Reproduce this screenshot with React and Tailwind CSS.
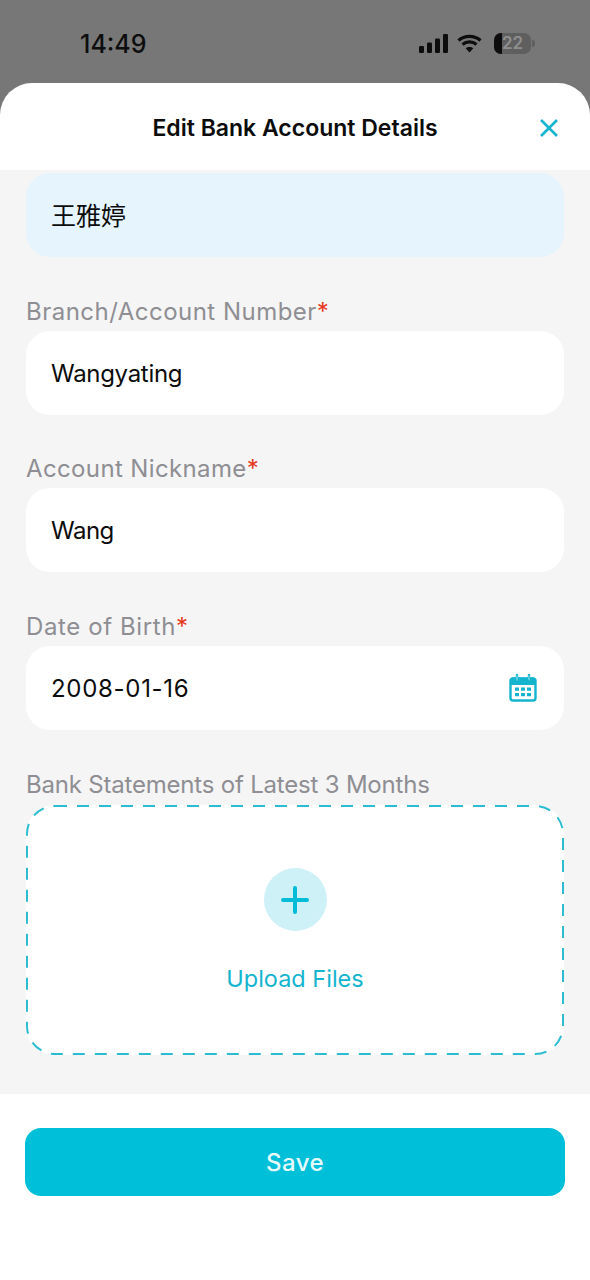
import React from "react";

const Field = ({ label, labelClass, className, value, valueClass, required, icon }) => (
    <div className={"flex flex-col " + className}>
        <label className={"h-[29px] text-[24px] leading-[29px] text-[#8e8e93] " + labelClass}>
            {label}
            {required && <span className="tracking-normal text-[#e5391f]">*</span>}
        </label>
        <div className="mt-[5px] flex h-[84px] items-center justify-between rounded-[24px] bg-white pl-[25px] pr-[27px] text-[24px] text-[#0c0c0c]">
            <span className={"pt-[1px] " + valueClass}>{value}</span>
            {icon}
        </div>
    </div>
);

const CalendarIcon = () => (
    <svg width="28" height="28" viewBox="0 0 28 28" fill="none">
        <rect x="1.5" y="4.5" width="25" height="22" rx="2.5" stroke="#14b4cf" strokeWidth="2.4" />
        <path d="M2 5.5a2 2 0 0 1 2-2h20a2 2 0 0 1 2 2V11H2z" fill="#14b4cf" />
        <path d="M8 1v6M20 1v6" stroke="#14b4cf" strokeWidth="2.4" strokeLinecap="round" />
        <path d="M8 2v4M20 2v4" stroke="#bfecf3" strokeWidth="0.8" strokeLinecap="round" />
        <path d="M6 13.5h4v3.2H6zM12 13.5h4v3.2h-4zM18 13.5h4v3.2h-4zM6 19h4v3.2H6zM12 19h4v3.2h-4zM18 19h4v3.2h-4z" fill="#14b4cf" />
    </svg>
);

const App = () => {
    return (
        <div className="flex h-[1280px] w-[590px] flex-col overflow-hidden bg-[#777777] font-['Inter','Noto_Sans_CJK_TC',sans-serif]">
            {/* status bar */}
            <div className="flex h-[83px] shrink-0 items-start justify-between pl-[80px] pr-[55px] pt-[28px]">
                <span className="text-[25px] font-medium leading-[32px] text-[#0d0d0d]">14:49</span>
                <div className="flex items-center gap-[9px] pt-[5px]">
                    <svg width="29" height="19" viewBox="0 0 29 19" fill="#0d0d0d">
                        <rect x="0" y="12" width="5" height="7" rx="1.2" />
                        <rect x="8" y="8.5" width="5" height="10.5" rx="1.2" />
                        <rect x="16" y="4.5" width="5" height="14.5" rx="1.2" />
                        <rect x="24" y="0" width="5" height="19" rx="1.2" />
                    </svg>
                    <svg className="mr-[3px]" width="25" height="19" viewBox="0 0 25 19" fill="none" stroke="#0d0d0d" strokeWidth="3.2">
                        <path d="M1.5 6.5C7.5 1 17.5 1 23.5 6.5" />
                        <path d="M5.5 10.5c4-3.4 10-3.4 14 0" />
                        <path d="M12.5 18.5l-3.8-4.2c2-1.6 5.6-1.6 7.6 0z" fill="#0d0d0d" stroke="none" />
                    </svg>
                    <div className="flex items-center gap-[1px]">
                        <div className="relative flex h-[21px] w-[37px] items-center justify-center overflow-hidden rounded-[7px] bg-[#5f5f5f]">
                            <div className="absolute inset-y-0 left-0 w-[8px] bg-[#0d0d0d]" />
                            <span className="relative text-[17px] font-semibold leading-none text-[#8f8f8f]">22</span>
                        </div>
                        <div className="h-[7px] w-[3px] rounded-r-full bg-[#5f5f5f]" />
                    </div>
                </div>
            </div>

            {/* sheet */}
            <div className="flex flex-1 flex-col overflow-hidden rounded-t-[32px] bg-white">
                <div className="relative flex h-[87px] shrink-0 items-center justify-center pt-[4px]">
                    <h1 className="text-[23px] font-semibold text-[#0c0c0c]">Edit Bank Account Details</h1>
                    <button className="absolute right-[31px] top-[35px]">
                        <svg width="20" height="20" viewBox="0 0 20 20" fill="none" stroke="#14b4cf" strokeWidth="2.6">
                            <path d="M2 2l16 16M18 2L2 18" />
                        </svg>
                    </button>
                </div>

                <div className="flex h-[924px] shrink-0 flex-col bg-[#f5f5f5] px-[26px] pt-[3px]">
                    <div className="flex h-[84px] items-center rounded-[24px] bg-[#e6f4fd] pl-[25px] pt-[3px] text-[25px] text-[#0c0c0c]">王雅婷</div>
                    <Field className="mt-[40px]" label="Branch/Account Number" labelClass="tracking-[0.48px]" value="Wangyating" valueClass="tracking-[-0.3px]" required />
                    <Field className="mt-[39px]" label="Account Nickname" labelClass="tracking-[0.37px]" value="Wang" valueClass="tracking-[-0.5px]" required />
                    <Field className="mt-[40px]" label="Date of Birth" labelClass="tracking-[0.6px]" value="2008-01-16" valueClass="tracking-[0.7px]" required icon={<CalendarIcon />} />

                    <div className="mt-[40px] flex flex-col">
                        <label className="h-[29px] text-[24px] leading-[29px] tracking-[-0.2px] text-[#8e8e93]">Bank Statements of Latest 3 Months</label>
                        <div className="relative mt-[6px] flex h-[250px] flex-col items-center rounded-[28px] bg-white pt-[63px]">
                            <svg className="absolute inset-0" width="538" height="250" fill="none">
                                <rect x="1" y="1" width="536" height="248" rx="28" stroke="#2cbcd2" strokeWidth="2" strokeDasharray="12 10" />
                            </svg>
                            <div className="flex h-[63px] w-[63px] items-center justify-center rounded-full bg-[#cdf1f6]">
                                <svg width="28" height="28" viewBox="0 0 28 28" fill="none" stroke="#00bcd9" strokeWidth="4" strokeLinecap="round">
                                    <path d="M14 2v24M2 14h24" />
                                </svg>
                            </div>
                            <span className="mt-[32px] text-[23.5px] leading-[32px] text-[#14b4cf]">Upload Files</span>
                        </div>
                    </div>
                </div>

                <div className="flex-1 bg-white px-[25px] pt-[34px]">
                    <button className="flex h-[68px] w-full items-center justify-center rounded-[16px] bg-[#00bfd9] pt-[1px] text-[24px] font-medium tracking-[0.5px] text-[#e6fbfd]">
                        Save
                    </button>
                </div>
            </div>
        </div>
    );
};

export default App;
